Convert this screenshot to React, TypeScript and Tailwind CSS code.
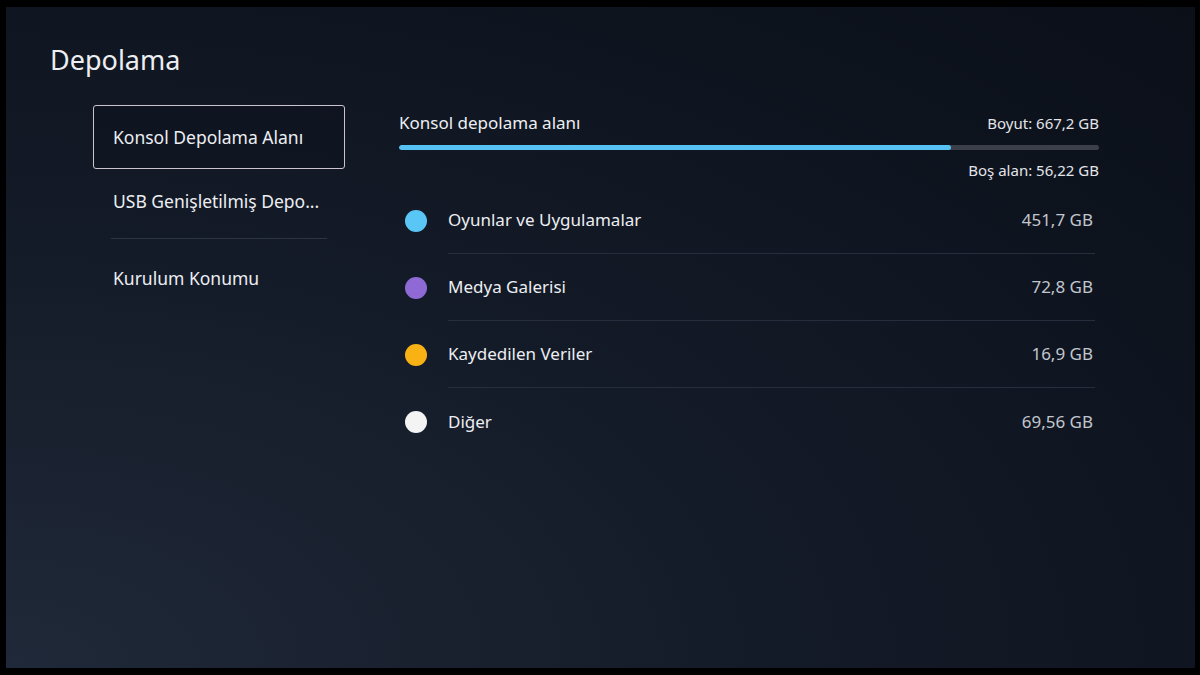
import React from 'react';

interface Category {
  name: string;
  size: string;
  color: string;
}

const categories: Category[] = [
  { name: 'Oyunlar ve Uygulamalar', size: '451,7 GB', color: 'bg-[#5ac6f6]' },
  { name: 'Medya Galerisi', size: '72,8 GB', color: 'bg-[#8f6ad7]' },
  { name: 'Kaydedilen Veriler', size: '16,9 GB', color: 'bg-[#f9b213]' },
  { name: 'Diğer', size: '69,56 GB', color: 'bg-[#f4f4f4]' },
];

const navItems = ['Konsol Depolama Alanı', 'USB Genişletilmiş Depo...', 'Kurulum Konumu'];

export default function App() {
  return (
    <div
      className="w-[1200px] h-[675px] bg-black pt-[7px] pl-[6px] pr-[5px] pb-[7px] overflow-hidden"
      style={{ fontFamily: '"Noto Sans", "Open Sans", sans-serif' }}
    >
      <div className="w-full h-full flex flex-col bg-[radial-gradient(ellipse_at_bottom_left,#202939_0%,#141b28_45%,#0a0f18_100%)] text-[#eceef2]">
        <h1 className="pl-[44px] pt-[35px] text-[27px] leading-[36px] font-normal">Depolama</h1>

        <div className="flex pl-[87px] mt-[27px]">
          {/* left menu */}
          <div className="w-[252px] flex flex-col">
            <div className="h-[64px] flex items-center px-[19px] border-[1.5px] border-[#cbc3cd] rounded-[3px] bg-[#0d121b]/40 text-[17.5px]">
              {navItems[0]}
            </div>
            <div className="h-[64px] flex items-center px-[20px] text-[17.5px]">{navItems[1]}</div>
            <div className="mx-[18px] mt-[5px] h-px bg-[#2c3343]" />
            <div className="h-[64px] flex items-center px-[20px] mt-[7px] text-[17.5px]">{navItems[2]}</div>
          </div>

          {/* storage details */}
          <div className="w-[700px] ml-[54px] pt-[6px] flex flex-col">
            <div className="h-[24px] flex items-center justify-between">
              <span className="text-[17px]">Konsol depolama alanı</span>
              <span className="text-[15px] text-[#e3e5ea]">Boyut: 667,2 GB</span>
            </div>
            <div className="mt-[10px] h-[5px] rounded-full bg-[#3a3f4a] overflow-hidden">
              <div className="h-full rounded-full bg-[#55c2f3]" style={{ width: `${(552 / 700) * 100}%` }} />
            </div>
            <div className="mt-[8px] h-[24px] flex items-center justify-end text-[15px] text-[#e3e5ea]">
              Boş alan: 56,22 GB
            </div>

            <div className="mt-[5px] flex flex-col">
              {categories.map((c, i) => (
                <div key={c.name} className="flex items-stretch">
                  <div className="flex items-center pl-[6px]">
                    <span className={`block w-[22px] h-[22px] rounded-full ${c.color}`} />
                  </div>
                  <div
                    className={`flex-1 ml-[21px] mr-[4px] h-[67px] flex items-center justify-between ${
                      i < categories.length - 1 ? 'border-b border-[#262d3c]' : ''
                    }`}
                  >
                    <span className="text-[17px]">{c.name}</span>
                    <span className="text-[17px] text-[#c2c6ce] pr-[2px]">{c.size}</span>
                  </div>
                </div>
              ))}
            </div>
          </div>
        </div>
      </div>
    </div>
  );
}
